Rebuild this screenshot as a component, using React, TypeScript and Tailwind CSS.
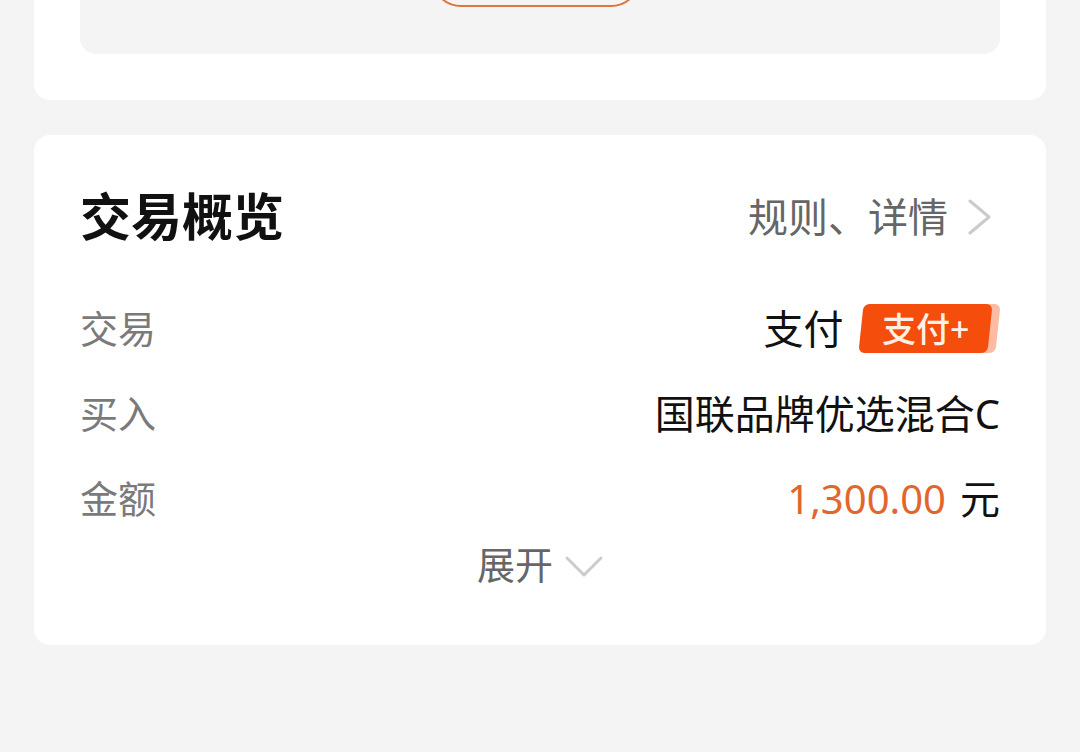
const font = { fontFamily: '"Noto Sans", "Noto Sans CJK SC", sans-serif' };

function Row({ label, children }: { label: string; children: React.ReactNode }) {
  return (
    <div className="flex items-center justify-between h-[85px]">
      <span className="text-[38px] text-[#7a7a7a]">{label}</span>
      <div className="flex items-center">{children}</div>
    </div>
  );
}

export default function App() {
  return (
    <div className="min-h-[752px] bg-[#f4f4f4] px-[34px]" style={font}>
      {/* 上一张卡片（只露出底部） */}
      <div className="bg-white rounded-b-2xl h-[100px] px-[46px]">
        <div className="bg-[#f4f4f4] rounded-b-2xl h-[54px] overflow-hidden flex justify-center">
          <div className="w-[210px] h-[60px] -mt-[53px] -ml-[8px] rounded-full border-2 border-[#e0763f]" />
        </div>
      </div>

      {/* 交易概览 */}
      <section className="mt-[35px] bg-white rounded-2xl px-[46px] pt-[56px] pb-[52px]">
        <header className="flex items-center justify-between mb-[44px]">
          <h2 className="text-[51px] font-bold text-[#111] leading-none">交易概览</h2>
          <div className="flex items-center text-[40px] text-[#666] leading-none">
            <span>规则、详情</span>
            <svg width="24" height="36" viewBox="0 0 24 36" className="ml-[20px] mr-[8px]" fill="none">
              <polyline points="2,2 21,18 2,34" stroke="#cbcbcb" strokeWidth="3" strokeLinecap="round" strokeLinejoin="round" />
            </svg>
          </div>
        </header>

        <Row label="交易">
          <span className="text-[40px] text-[#111]">支付</span>
          <div className="relative ml-[17px] mr-[10px]">
            <div className="absolute inset-0 translate-x-[8px] -skew-x-6 rounded-md bg-[#fcbca4]" />
            <div className="relative -skew-x-6 rounded-md bg-[#f54d0c] h-[49px] px-[21px] flex items-center">
              <span className="skew-x-6 text-[34px] font-medium text-[#fff1e6] leading-none">支付+</span>
            </div>
          </div>
        </Row>

        <Row label="买入">
          <span className="text-[40px] text-[#111]">国联品牌优选混合C</span>
        </Row>

        <Row label="金额">
          <span className="text-[40px] text-[#e2662c]">1,300.00</span>
          <span className="text-[40px] text-[#111] ml-[14px]">元</span>
        </Row>

        <div className="flex items-center justify-center -mt-[5px] text-[38px] text-[#666]">
          <span>展开</span>
          <svg width="38" height="24" viewBox="0 0 38 24" className="ml-[12px] mt-[4px]" fill="none">
            <polyline points="2,3 19,20 36,3" stroke="#cbcbcb" strokeWidth="3" strokeLinecap="round" strokeLinejoin="round" />
          </svg>
        </div>
      </section>
    </div>
  );
}
